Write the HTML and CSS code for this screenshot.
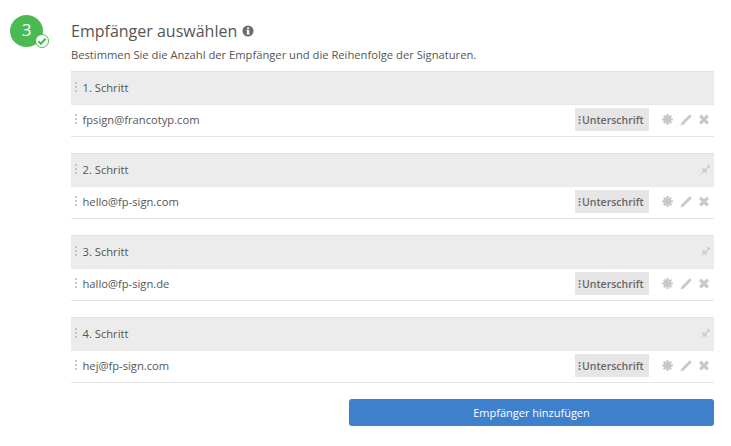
FILE: index.html
```html
<!DOCTYPE html>
<html lang="de">
<head>
<meta charset="utf-8">
<title>Empfänger auswählen</title>
<link rel="stylesheet" href="styles.css">
</head>
<body>
<svg class="defs" width="0" height="0" aria-hidden="true">
  <defs>
    <g id="grip"><rect x="0" y="0" width="2" height="2"/><rect x="0" y="4" width="2" height="2"/><rect x="0" y="8" width="2" height="2"/></g>
    <path id="ast" d="M4.500 0h2l.3 2.300L8.600.9 10 2.300 8.600 4l2.300.4v2l-2.300.4L10 8.500 8.600 9.900 6.800 8.500 6.500 11h-2l-.3-2.500-1.800 1.400L1 8.500l1.400-1.700L.1 6.400v-2L2.400 4 1 2.300 2.400.9l1.800 1.400z"/>
    <path id="pen" d="M9.800.3l1.900 1.900L3.600 10.400.4 11.600l1.200-3.200z"/>
    <path id="cross" d="M2.300.6L5 3.300 7.700.6l2.300 2.300L7.300 5.600 10 8.300 7.700 10.600 5 7.900 2.300 10.600 0 8.300 2.700 5.600 0 2.900z"/>
    <path id="pin" d="M.5 10.500L4 6 2.500 5 4 3.800l2 .7L8 2l-.5-1 1-.5 2 2-.5 1-1-.3L6.800 5.500 7 7.500 6 8.500 5 7z"/>
  </defs>
</svg>
<main class="page">
  <div class="step-badge">
    <span class="num">3</span>
    <span class="check">
      <svg width="12" height="12" viewBox="0 0 12 12"><path d="M2.500 6.300l2.400 2.400 4.600-5" fill="none" stroke="#48b553" stroke-width="2"/></svg>
    </span>
  </div>
  <section class="content">
    <h1 class="title">Empfänger auswählen
      <svg class="info" width="12" height="12" viewBox="0 0 12 12"><circle cx="6" cy="6" r="5.500" fill="#6b6b6b"/><rect x="5" y="5" width="2.200" height="4.200" fill="#fff"/><rect x="4.400" y="8.400" width="3.400" height="1" fill="#fff"/><rect x="4.400" y="5" width="2" height="1" fill="#fff"/><rect x="5" y="2.500" width="2.200" height="1.600" fill="#fff"/></svg>
    </h1>
    <p class="desc">Bestimmen Sie die Anzahl der Empfänger und die Reihenfolge der Signaturen.</p>

    <div class="step">
      <div class="step-head">
        <svg class="grip" width="2" height="10" viewBox="0 0 2 10"><use href="#grip"/></svg>
        <span class="label">1. Schritt</span>
      </div>
      <div class="step-row">
        <svg class="grip" width="2" height="10" viewBox="0 0 2 10"><use href="#grip"/></svg>
        <span class="email">fpsign@francotyp.com</span>
        <span class="role"><span class="dots">⁝</span>Unterschrift</span>
        <span class="actions">
          <svg width="11" height="11" viewBox="0 0 11 11"><use href="#ast"/></svg>
          <svg width="12" height="12" viewBox="0 0 12 12"><use href="#pen"/></svg>
          <svg width="10" height="11" viewBox="0 0 10 11"><use href="#cross"/></svg>
        </span>
      </div>
    </div>

    <div class="step">
      <div class="step-head">
        <svg class="grip" width="2" height="10" viewBox="0 0 2 10"><use href="#grip"/></svg>
        <span class="label">2. Schritt</span>
        <svg class="pin" width="12" height="12" viewBox="0 0 11 11"><use href="#pin"/></svg>
      </div>
      <div class="step-row">
        <svg class="grip" width="2" height="10" viewBox="0 0 2 10"><use href="#grip"/></svg>
        <span class="email">hello@fp-sign.com</span>
        <span class="role"><span class="dots">⁝</span>Unterschrift</span>
        <span class="actions">
          <svg width="11" height="11" viewBox="0 0 11 11"><use href="#ast"/></svg>
          <svg width="12" height="12" viewBox="0 0 12 12"><use href="#pen"/></svg>
          <svg width="10" height="11" viewBox="0 0 10 11"><use href="#cross"/></svg>
        </span>
      </div>
    </div>

    <div class="step">
      <div class="step-head">
        <svg class="grip" width="2" height="10" viewBox="0 0 2 10"><use href="#grip"/></svg>
        <span class="label">3. Schritt</span>
        <svg class="pin" width="12" height="12" viewBox="0 0 11 11"><use href="#pin"/></svg>
      </div>
      <div class="step-row">
        <svg class="grip" width="2" height="10" viewBox="0 0 2 10"><use href="#grip"/></svg>
        <span class="email">hallo@fp-sign.de</span>
        <span class="role"><span class="dots">⁝</span>Unterschrift</span>
        <span class="actions">
          <svg width="11" height="11" viewBox="0 0 11 11"><use href="#ast"/></svg>
          <svg width="12" height="12" viewBox="0 0 12 12"><use href="#pen"/></svg>
          <svg width="10" height="11" viewBox="0 0 10 11"><use href="#cross"/></svg>
        </span>
      </div>
    </div>

    <div class="step">
      <div class="step-head">
        <svg class="grip" width="2" height="10" viewBox="0 0 2 10"><use href="#grip"/></svg>
        <span class="label">4. Schritt</span>
        <svg class="pin" width="12" height="12" viewBox="0 0 11 11"><use href="#pin"/></svg>
      </div>
      <div class="step-row">
        <svg class="grip" width="2" height="10" viewBox="0 0 2 10"><use href="#grip"/></svg>
        <span class="email">hej@fp-sign.com</span>
        <span class="role"><span class="dots">⁝</span>Unterschrift</span>
        <span class="actions">
          <svg width="11" height="11" viewBox="0 0 11 11"><use href="#ast"/></svg>
          <svg width="12" height="12" viewBox="0 0 12 12"><use href="#pen"/></svg>
          <svg width="10" height="11" viewBox="0 0 10 11"><use href="#cross"/></svg>
        </span>
      </div>
    </div>

    <div class="footer">
      <button class="add" type="button">Empfänger hinzufügen</button>
    </div>
  </section>
</main>
</body>
</html>
```
FILE: styles.css
```css
html, body {
  margin: 0;
  padding: 0;
  background: #fff;
}
body {
  width: 731px;
  height: 446px;
  overflow: hidden;
  font-family: "Open Sans", "Noto Sans", sans-serif;
  color: #555;
}
.defs {
  display: block;
  height: 0;
}
.page {
  display: flex;
  padding: 15px 17px 0 10px;
}
.step-badge {
  position: relative;
  flex: none;
  width: 33px;
  height: 32px;
  margin-right: 28px;
  background: #4aba55;
  border-radius: 50%;
  display: flex;
  justify-content: center;
}
.num {
  color: #fff;
  font-size: 17px;
  line-height: 30px;
}
.check {
  position: absolute;
  right: -6px;
  bottom: -1px;
  width: 14px;
  height: 14px;
  background: #fff;
  border: 1px solid #4aba55;
  border-radius: 50%;
  box-sizing: border-box;
  display: flex;
  align-items: center;
  justify-content: center;
}
.content {
  flex: 1;
  min-width: 0;
}
.title {
  margin: 6px 0 0;
  font-size: 16px;
  font-weight: 400;
  line-height: 20px;
  color: #555;
  display: flex;
  align-items: center;
  gap: 5px;
}
.desc {
  margin: 6px 0 0;
  font-size: 11.200px;
  line-height: 16px;
  color: #555;
  white-space: nowrap;
}
.step {
  margin-top: 16px;
}
.desc + .step {
  margin-top: 8px;
}
.step-head {
  display: flex;
  align-items: center;
  height: 32px;
  padding: 0 3px 0 4px;
  background: #ececec;
  border-top: 1px solid #e2e2e2;
  font-size: 11.200px;
}
.step-row {
  display: flex;
  align-items: center;
  height: 29px;
  padding: 0 5px 2px 4px;
  border-top: 1px solid #e8e8e8;
  border-bottom: 1px solid #e4e4e4;
  font-size: 11.200px;
}
.label {
  margin-bottom: 2px;
}
.grip {
  flex: none;
  margin-right: 5.500px;
  margin-bottom: 2px;
  fill: #c6c6c6;
}
.pin {
  margin-left: auto;
  fill: #cccccc;
}
.email {
  flex: 1;
  min-width: 0;
  margin-bottom: 1px;
}
.role {
  display: flex;
  align-items: center;
  width: 74px;
  height: 23px;
  margin-right: 13px;
  padding-left: 3px;
  box-sizing: border-box;
  background: #e6e6e6;
  color: #666;
  font-size: 10.500px;
  font-weight: 600;
}
.dots {
  width: 4px;
  overflow: hidden;
  font-weight: 700;
}
.actions {
  display: flex;
  align-items: center;
  gap: 7px;
  fill: #c8c8c8;
}
.footer {
  display: flex;
  justify-content: flex-end;
  margin-top: 16px;
}
.add {
  width: 365px;
  height: 27px;
  padding: 0;
  background: #3f80cd;
  border: 0;
  border-radius: 3px;
  color: #fff;
  font-family: inherit;
  font-size: 11px;
}
```
